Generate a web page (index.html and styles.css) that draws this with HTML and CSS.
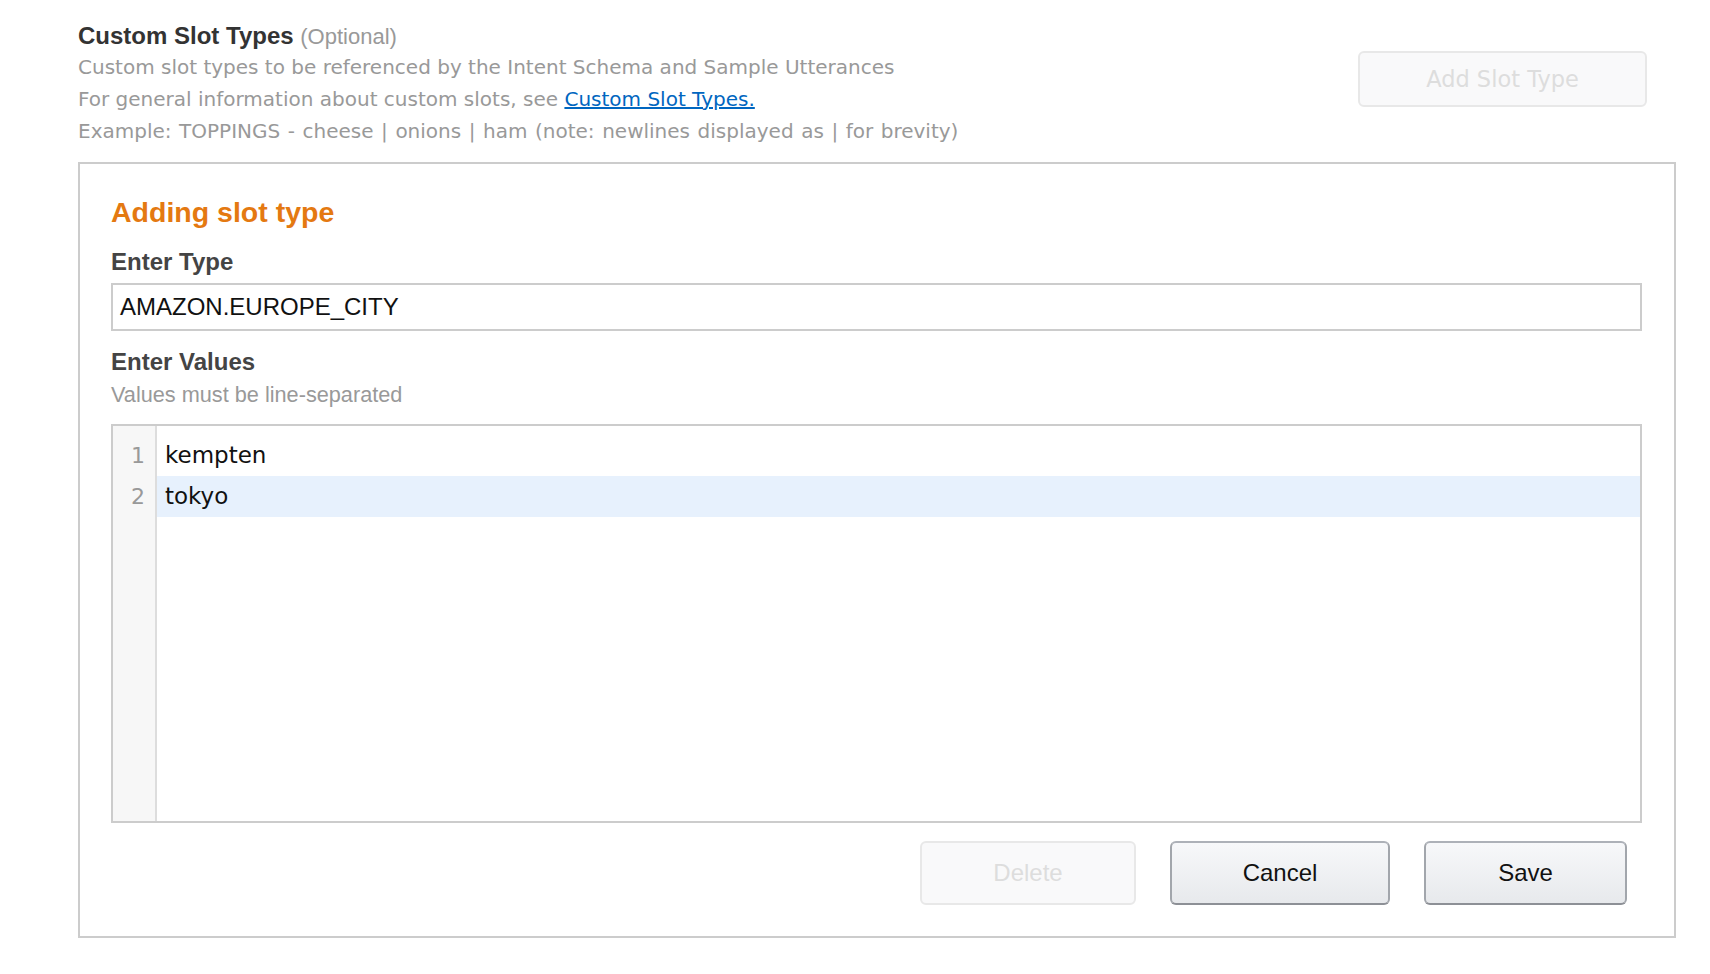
FILE: index.html
```html
<!DOCTYPE html>
<html lang="en">
<head>
<meta charset="utf-8">
<title>Custom Slot Types</title>
<link rel="stylesheet" href="styles.css">
</head>
<body>
<div class="page">
  <div class="header">
    <div class="header-text">
      <div class="title">Custom Slot Types <span class="optional">(Optional)</span></div>
      <div class="desc">Custom slot types to be referenced by the Intent Schema and Sample Utterances</div>
      <div class="desc">For general information about custom slots, see <a class="link" href="#">Custom Slot Types.</a></div>
      <div class="desc desc-example">Example: TOPPINGS - cheese | onions | ham (note: newlines displayed as | for brevity)</div>
    </div>
    <button class="btn-add" disabled>Add Slot Type</button>
  </div>

  <div class="panel">
    <div class="panel-title">Adding slot type</div>
    <div class="label label-type">Enter Type</div>
    <div class="input">AMAZON.EUROPE_CITY</div>
    <div class="label label-values">Enter Values</div>
    <div class="hint">Values must be line-separated</div>
    <div class="editor">
      <div class="gutter">
        <div class="num">1</div>
        <div class="num">2</div>
      </div>
      <div class="lines">
        <div class="line">kempten</div>
        <div class="line active">tokyo</div>
      </div>
    </div>
    <div class="actions">
      <button class="btn btn-disabled" disabled>Delete</button>
      <button class="btn btn-cancel">Cancel</button>
      <button class="btn btn-save">Save</button>
    </div>
  </div>
</div>
</body>
</html>
```

FILE: styles.css
```css
html, body {
  margin: 0;
  padding: 0;
  background: #ffffff;
}

body {
  font-family: "Liberation Sans", Arial, sans-serif;
}

.page {
  padding: 21px 34px 0 78px;
}

.header {
  display: flex;
  justify-content: space-between;
  align-items: flex-start;
  padding-right: 29px;
}

.title {
  font-size: 24px;
  font-weight: bold;
  color: #333333;
  line-height: 29px;
}

.optional {
  font-weight: normal;
  font-size: 22px;
  color: #999999;
}

.desc {
  font-family: "DejaVu Sans", Verdana, sans-serif;
  font-size: 20px;
  color: #999999;
  line-height: 32px;
}

.desc-example {
  word-spacing: 1.2px;
}

.link {
  color: #0066c0;
  text-decoration: underline;
}

.btn-add {
  margin-top: 30px;
  width: 289px;
  height: 56px;
  background: #f9f9fa;
  border: 2px solid #e8e8e8;
  border-radius: 6px;
  font-family: "DejaVu Sans", Verdana, sans-serif;
  font-size: 22.5px;
  color: #dddddd;
}

.panel {
  margin-top: 15px;
  border: 2px solid #cccccc;
  padding: 28px 32px 31px 31px;
}

.panel-title {
  font-size: 28.5px;
  font-weight: bold;
  color: #e47911;
  line-height: 40px;
}

.label {
  font-size: 24px;
  font-weight: bold;
  color: #444444;
  line-height: 30px;
}

.label-type {
  margin-top: 15px;
}

.input {
  margin-top: 6px;
  height: 44px;
  border: 2px solid #cccccc;
  padding: 0 7px;
  font-size: 24px;
  line-height: 44px;
  color: #111111;
}

.label-values {
  margin-top: 16px;
}

.hint {
  font-size: 21.7px;
  color: #999999;
  line-height: 34px;
  margin-top: 1px;
}

.editor {
  margin-top: 12px;
  height: 395px;
  border: 2px solid #cccccc;
  display: flex;
}

.gutter {
  width: 42px;
  background: #f7f7f7;
  border-right: 2px solid #dddddd;
  padding-top: 9px;
}

.num {
  height: 41px;
  line-height: 41px;
  text-align: right;
  padding-right: 10px;
  font-family: "DejaVu Sans", sans-serif;
  font-size: 22px;
  color: #999999;
}

.lines {
  flex: 1;
  padding-top: 9px;
}

.line {
  height: 41px;
  line-height: 41px;
  padding-left: 8px;
  font-family: "DejaVu Sans", sans-serif;
  font-size: 23px;
  color: #111111;
}

.line.active {
  background: #e7f1fd;
}

.actions {
  display: flex;
  justify-content: flex-end;
  gap: 34px;
  margin-top: 18px;
  padding-right: 15px;
}

.btn {
  height: 64px;
  border-radius: 6px;
  font-family: "Liberation Sans", Arial, sans-serif;
  font-size: 24px;
  color: #111111;
}

.btn-disabled {
  width: 216px;
  background: #f9f9fa;
  border: 2px solid #e8e8e8;
  color: #dddddd;
}

.btn-cancel, .btn-save {
  background: linear-gradient(to bottom, #f7f8fa, #e7e9ec);
  border: 2px solid #a2a6ac;
  border-top-color: #adb1b8;
  border-bottom-color: #8d9096;
}

.btn-cancel {
  width: 220px;
}

.btn-save {
  width: 203px;
}
```
